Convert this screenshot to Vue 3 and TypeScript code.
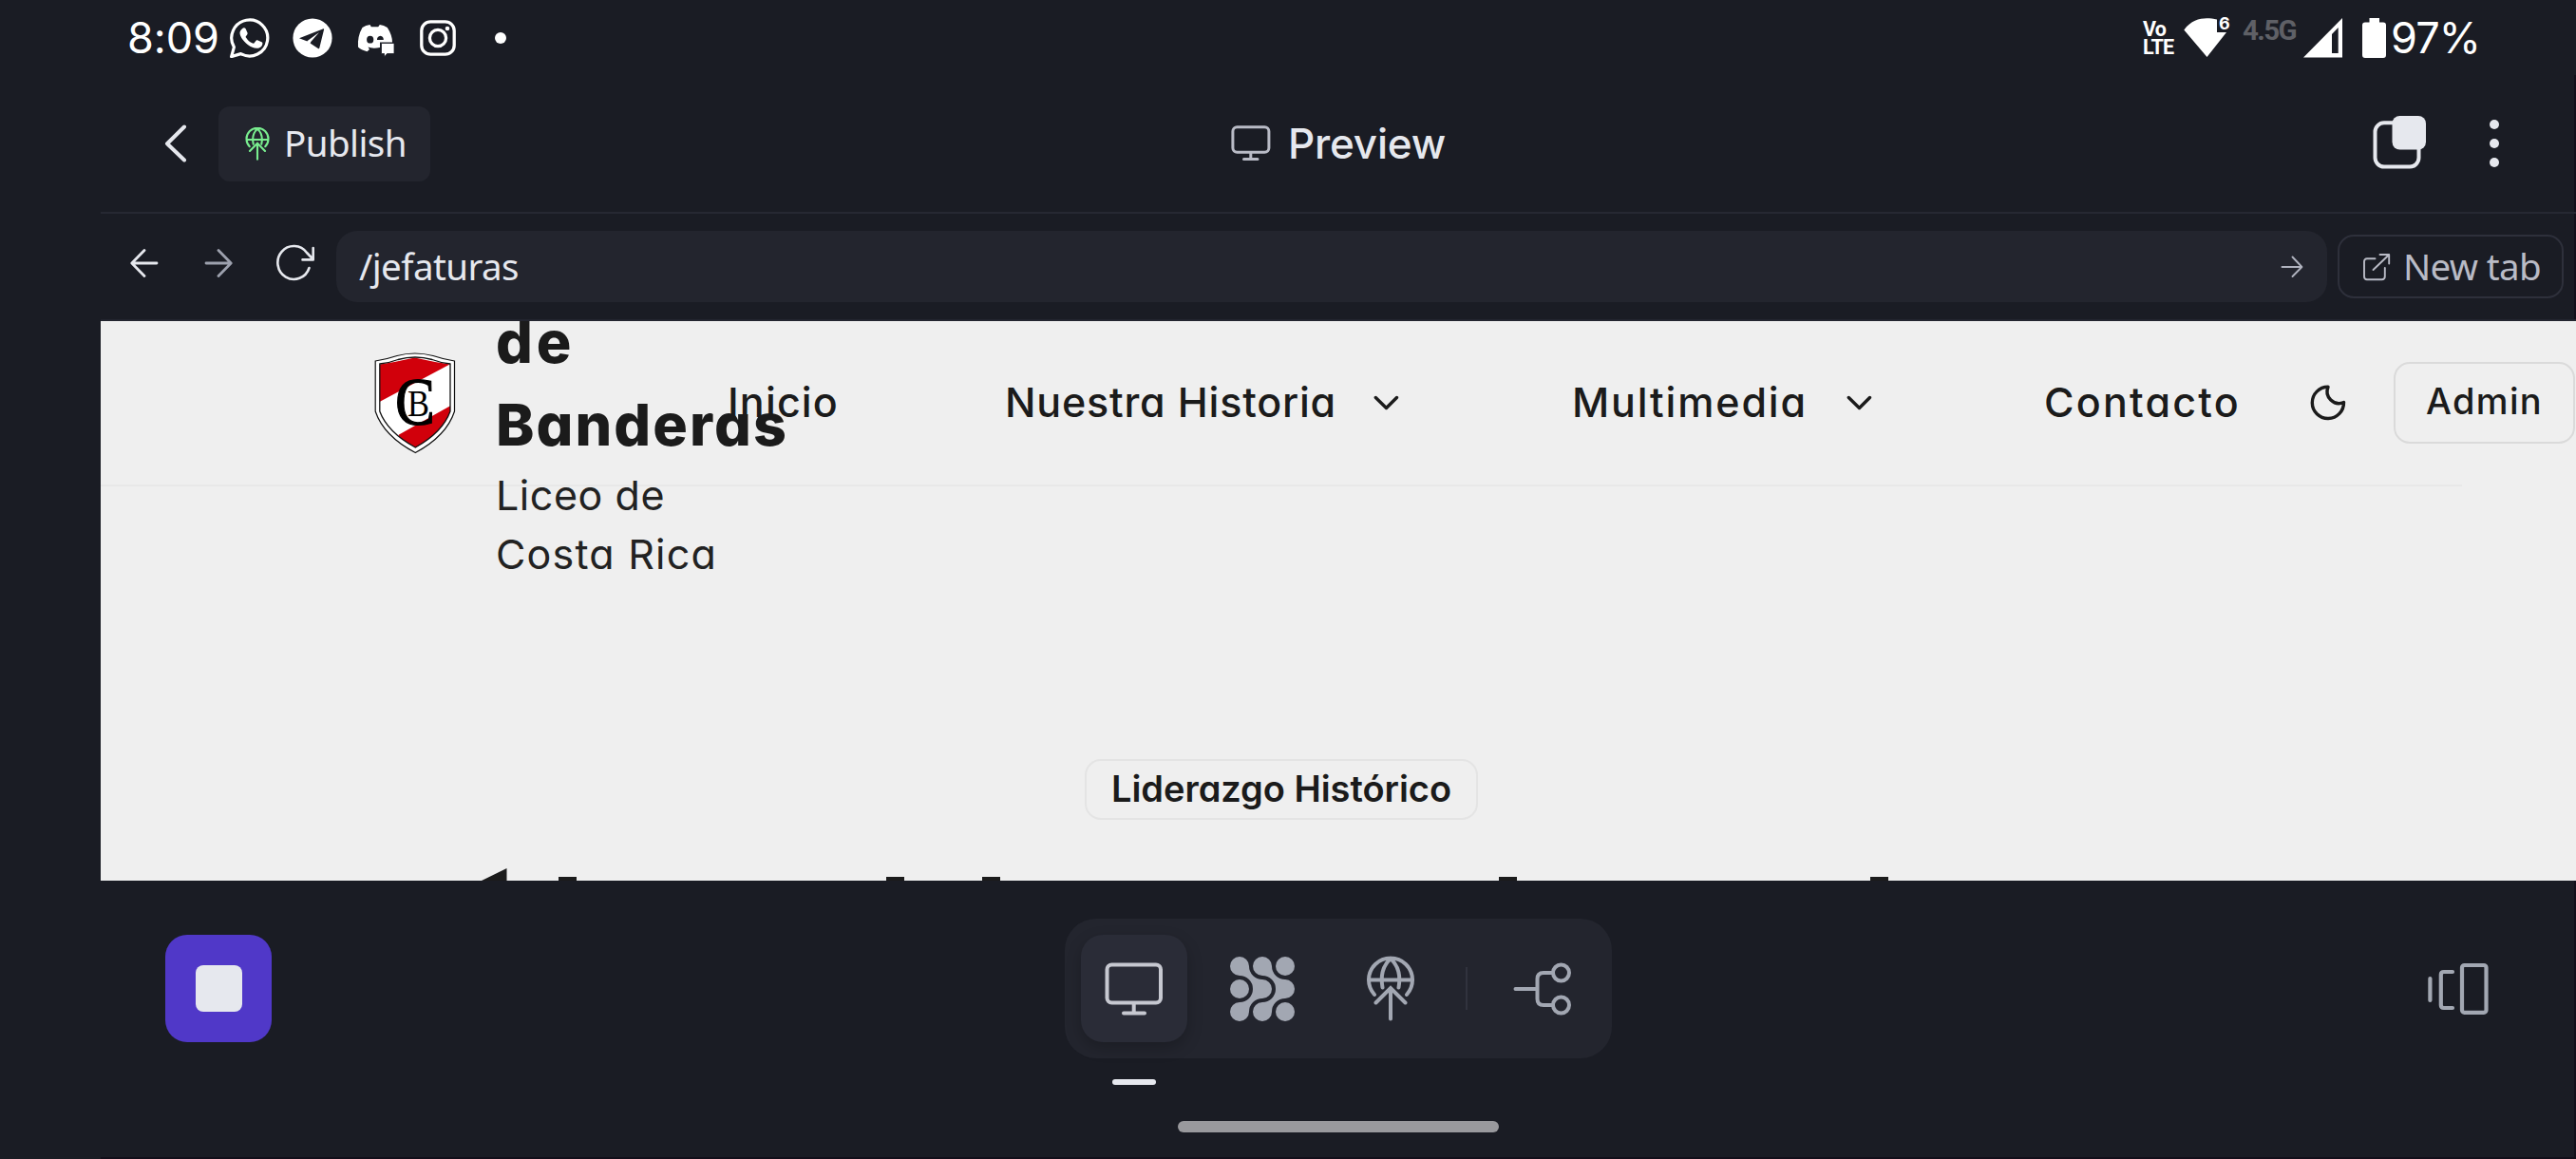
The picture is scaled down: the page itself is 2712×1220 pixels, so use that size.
<script setup lang="ts">
import type { Directive } from 'vue'

// Tracks a label so that its advance width equals the given number of pixels.
const vFit: Directive<HTMLElement, number> = {
  mounted(el, { value }) {
    const count = (el.textContent ?? '').trim().length
    const natural = el.getBoundingClientRect().width
    el.style.letterSpacing = `${((value - natural) / count).toFixed(3)}px`
  },
}

const headingTops: number[] = [482, 827, 928, 1472, 1863]
</script>

<template>
  <div class="device">
    <header class="status">
      <div class="status-left">
        <span v-fit="97" class="clock">8:09</span>
        <svg class="i-wa" width="42" height="42" viewBox="0 0 42 42">
          <path d="M1.6 40.6 4.4 30.6A19 19 0 1 1 11.6 37.6Z" fill="none" stroke="#fff" stroke-width="3.2" stroke-linejoin="round" />
          <path d="M13 11.2c1-1.2 2.900-1.300 3.500-.1l2 4.500c.4 1-.3 1.900-1.500 3.400-.5.6-.4 1 0 1.600 1.800 2.900 3.900 4.800 7 6 .7.300 1.100.1 1.600-.4l2-2.500c.6-.7 1.200-.6 1.900-.3l4 1.900c.7.4 1 .7.9 1.400-.3 3.400-3 5.300-6.300 5.100C21 31.500 11 22.500 10.500 16c-.1-2 1-3.600 2.500-4.800Z" fill="#fff" />
        </svg>
        <svg class="i-tg" width="42" height="42" viewBox="0 0 42 42">
          <circle cx="21" cy="21" r="20.600" fill="#fff" />
          <path d="M7 21.300 32.500 11.200c.5-.2.7.1.6.7L28.300 31.500c-.2.800-.7 1-1.400.5L15.500 24.600Z" fill="#1a1c24" />
          <path d="M15.300 24.300 28 15 19.500 24.800 16.800 30Z" fill="#fff" />
        </svg>
        <svg class="i-dc" width="40" height="36" viewBox="0 0 40 36">
          <path fill-rule="evenodd" d="M5.500 5Q9 2.600 13.500 2l1.300 2.200h7.400L23.800 2q4.400.7 8 3Q37 13 37 20.500H24V26q-8 1.500-12.500-.5l1.500 2.500-2.500 2.200Q4 28.500 1 25.500.2 14 5.500 5ZM13.700 13.800a3.600 3.900 0 1 0 0 7.800 3.600 3.900 0 0 0 0-7.800ZM24.500 13.800q-3.400.300-3.600 4.200h6.900q0-3.700-3.300-4.200Z" fill="#fff" />
          <path d="M25.500 21.500H39V32.500H31.500L28.500 36V32.500H25.500Z" fill="#fff" stroke="#1a1c24" stroke-width="0.800" />
        </svg>
        <svg class="i-ig" width="38" height="38" viewBox="0 0 38 38">
          <rect x="1.800" y="1.800" width="34.400" height="34.400" rx="9.500" fill="none" stroke="#fff" stroke-width="3.300" />
          <circle cx="19" cy="19" r="8.600" fill="none" stroke="#fff" stroke-width="3.300" />
          <circle cx="29" cy="9" r="2.300" fill="#fff" />
        </svg>
        <i class="more-dot"></i>
      </div>
      <div class="status-right">
        <div class="volte"><span>Vo</span><span>LTE</span></div>
        <div class="wifi">
          <svg width="46" height="42" viewBox="0 0 46 42">
            <path d="M.3 12.500C11 -1.500 24 -.5 35 1.500V15H45L24.500 41Z" fill="#fff" />
          </svg>
          <span class="wifi-gen">6</span>
        </div>
        <span v-fit="56" class="net">4.5G</span>
        <svg class="i-sig" width="42" height="42" viewBox="0 0 42 42">
          <path fill-rule="evenodd" d="M0 41.500 41 0V41.500ZM30 17V37H36.700V10Z" fill="#fff" />
        </svg>
        <svg class="i-bat" width="26" height="42" viewBox="0 0 26 42">
          <path d="M7.500 0H18V4.500H22Q25 4.500 25 7.500V39Q25 42 22 42H3Q0 42 0 39V7.500Q0 4.500 3 4.500H7.500Z" fill="#fff" />
        </svg>
        <span v-fit="94" class="pct">97%</span>
      </div>
    </header>

    <main class="app">
      <div class="topbar">
        <div class="top-left">
          <svg class="back" width="24" height="40" viewBox="0 0 24 40" fill="none" stroke="#e6e8ee" stroke-width="4" stroke-linecap="round" stroke-linejoin="round">
            <path d="M21 2.500 3 20.200 21 37.500" />
          </svg>
          <button class="publish">
            <svg width="26" height="35" viewBox="0 0 52 69" fill="none" stroke="#79ee8f" stroke-width="4.200" stroke-linecap="round">
              <path d="M9.500 40A23 23 0 1 1 42.500 40M3 25.500H49M17.500 35Q13 14 26 3Q39 14 34.500 35M10 49.500 26 33 42 49.500M26 34V67" />
            </svg>
            <span v-fit="129" class="plex">Publish</span>
          </button>
        </div>
        <div class="top-title">
          <svg width="42" height="38" viewBox="0 0 42 38" fill="none" stroke="#b9bbc6" stroke-width="3" stroke-linecap="round">
            <rect x="1.900" y="1.700" width="38" height="26.600" rx="4.500" /><path d="M20.800 28.500V35.500M13.500 35.500H28" />
          </svg>
          <span v-fit="166" class="title">Preview</span>
        </div>
        <div class="top-right">
          <svg width="58" height="58" viewBox="0 0 58 58">
            <rect x="2.500" y="8.300" width="46" height="46.200" rx="9.500" fill="none" stroke="#e6e8ee" stroke-width="4" />
            <rect x="20.500" y="1" width="35.500" height="35.500" rx="8" fill="#e6e8ee" />
          </svg>
          <div class="kebab"><i></i><i></i><i></i></div>
        </div>
      </div>

      <div class="addressbar">
        <svg class="nav-back" width="30" height="30" viewBox="0 0 30 30" fill="none" stroke="#e6e8ee" stroke-width="2.800" stroke-linecap="round" stroke-linejoin="round"><path d="M28 15H2M15 1.500 1.800 15 15 28.500" /></svg>
        <svg class="nav-fwd" width="30" height="30" viewBox="0 0 30 30" fill="none" stroke="#9da1ae" stroke-width="2.800" stroke-linecap="round" stroke-linejoin="round"><path d="M2 15H28M15 1.500 28.200 15 15 28.500" /></svg>
        <svg class="reload" width="42" height="40" viewBox="0 0 42 40" fill="none" stroke="#e6e8ee" stroke-width="2.600" stroke-linecap="round" stroke-linejoin="round">
          <path d="M35.500 25A17 17.500 0 1 1 33 9L39.700 16M39.700 4V16.400H28.500" />
        </svg>
        <div class="url">
          <span v-fit="168" class="plex">/jefaturas</span>
          <svg width="24" height="24" viewBox="0 0 24 24" fill="none" stroke="#b0b3bf" stroke-width="1.900" stroke-linecap="round" stroke-linejoin="round"><path d="M1.500 12H22M12.500 1.500 22.400 12 12.500 22" /></svg>
        </div>
        <button class="newtab">
          <svg width="30" height="30" viewBox="0 0 30 30" fill="none" stroke="#b9bbc6" stroke-width="1.900" stroke-linecap="round" stroke-linejoin="round">
            <path d="M13.500 6.300H5Q2 6.300 2 9.300V25Q2 28.200 5 28.200H20.500Q23.800 28.200 23.800 25V16M18.500 2H28.200V11.500M28 2.200 11.500 18" />
          </svg>
          <span v-fit="145" class="plex">New tab</span>
        </button>
      </div>

      <section class="page">
        <nav class="site-nav">
          <svg class="crest" width="86" height="107" viewBox="0 0 86 107">
            <defs>
              <clipPath id="field"><path d="M6 12.500Q23 10 42.500 5.500 62 10 80 12.500V62Q72 84 43.500 100 14 84 6 62Z" /></clipPath>
            </defs>
            <path d="M1.200 9Q12 7.500 24 3.500 42.500-1.500 62 3.500 74 7.500 84.500 9V62Q76 88 43.300 105.500 10 88 1.200 62Z" fill="#fff" stroke="#111" stroke-width="1.200" />
            <g clip-path="url(#field)">
              <rect width="86" height="107" fill="#fff" />
              <path d="M0 0H86V9L0 55Z" fill="#d1000b" />
              <path d="M86 53V107H26V86.500L0 101Z" fill="#d1000b" />
            </g>
            <path d="M5.800 12Q16 11 25 7.500 43 2.500 61 7.500 70 11 80 12V62Q72 84 43.300 100 14 84 5.800 62Z" fill="none" stroke="#111" stroke-width="1.300" />
            <text x="22" y="75.500" textLength="42" lengthAdjust="spacingAndGlyphs" font-family="'Liberation Serif', serif" font-size="72" stroke="#000" stroke-width="1.200">C</text>
            <text x="35" y="66.500" textLength="23" lengthAdjust="spacingAndGlyphs" font-family="'Liberation Serif', serif" font-size="41">B</text>
          </svg>
          <div class="brand">
            <div class="brand-name">
              <div><span v-fit="83">de</span></div>
              <div><span v-fit="308">Banderas</span></div>
            </div>
            <div class="brand-sub">
              <div><span v-fit="178">Liceo de</span></div>
              <div><span v-fit="233">Costa Rica</span></div>
            </div>
          </div>
          <a v-fit="117" class="link l1">Inicio</a>
          <a v-fit="349" class="link l2">Nuestra Historia</a>
          <svg class="chev c1" width="27" height="17" viewBox="0 0 27 17"><path d="M2.300 2.500 13.500 13.500 24.500 2.500" /></svg>
          <a v-fit="248" class="link l3">Multimedia</a>
          <svg class="chev c2" width="27" height="17" viewBox="0 0 27 17"><path d="M2.300 2.500 13.500 13.500 24.500 2.500" /></svg>
          <a v-fit="207" class="link l4">Contacto</a>
          <svg class="moon" width="38" height="38" viewBox="0 0 38 38" fill="none" stroke="#1b1b1b" stroke-width="3.400" stroke-linecap="round" stroke-linejoin="round">
            <path d="M19 2.300A12.500 12.500 0 0 0 35.500 18.500 16.600 16.600 0 1 1 19 2.300Z" />
          </svg>
          <button class="admin"><span v-fit="123">Admin</span></button>
        </nav>
        <div class="badge"><span v-fit="358">Liderazgo Histórico</span></div>
        <svg class="cut-heading" width="2606" height="14" viewBox="0 0 2606 14" fill="#1b1b1b">
          <path d="M401 14 427.500 1V14Z" />
          <rect v-for="x in headingTops" :key="x" :x="x" y="10" width="19" height="4" />
        </svg>
      </section>

      <footer class="dock">
        <button class="stop"><i></i></button>
        <div class="tools">
          <div class="tool active">
            <svg width="62" height="58" viewBox="0 0 62 58" fill="none" stroke="#c6c8d0" stroke-width="4" stroke-linecap="round">
              <rect x="2.500" y="3.500" width="56.500" height="40" rx="5" /><path d="M30.700 44V54M20 54.500H42" />
            </svg>
          </div>
          <svg class="t-grid" width="68" height="68" viewBox="0 0 68 68" fill="#a2a7b2">
            <path d="M10 20A14 14 0 0 1 10 48A10 10 0 1 0 20 58A14 14 0 0 1 34 44A10 10 0 0 0 34 24A14 14 0 0 1 20 10A10 10 0 1 0 10 20Z" />
            <path d="M34 20A14 14 0 0 1 34 48A10 10 0 1 0 44 58A14 14 0 0 1 58 44A10 10 0 0 0 58 24A14 14 0 0 1 44 10A10 10 0 1 0 34 20Z" />
            <circle cx="58" cy="10" r="10" /><circle cx="10" cy="34" r="10" /><circle cx="58" cy="58" r="10" />
          </svg>
          <svg class="t-globe" width="52" height="69" viewBox="0 0 52 69" fill="none" stroke="#a2a7b2" stroke-width="4" stroke-linecap="round">
            <path d="M9 41A23 23 0 1 1 43 41M3 25.500H49M17.500 33.500Q14 14 26 3Q38 14 34.500 33.500M10.500 49.500 26 34 41.500 49.500M26 35V66.500" />
          </svg>
          <i class="sep"></i>
          <svg class="t-branch" width="64" height="58" viewBox="0 0 64 58" fill="none" stroke="#a2a7b2" stroke-width="4" stroke-linecap="round">
            <circle cx="51.500" cy="12" r="8.500" /><circle cx="51.500" cy="46" r="8.500" />
            <path d="M3.500 29H26M43 12H33Q26.500 12 26.500 18.500V39.500Q26.500 46 33 46H43" />
          </svg>
        </div>
        <svg class="panels" width="66" height="58" viewBox="0 0 66 58" fill="none" stroke="#a2a7b2" stroke-width="4.200" stroke-linecap="round" stroke-linejoin="round">
          <path d="M3.400 18V41M27 11H18Q14.800 11 14.800 14V46Q14.800 49 18 49H27" /><rect x="37" y="4" width="25.500" height="49.800" rx="2.500" />
        </svg>
        <i class="active-mark"></i>
        <i class="home-pill"></i>
      </footer>
    </main>
  </div>
</template>

<style>
body { margin: 0; background: #1a1c24; overflow: hidden; }
</style>

<style scoped>
.device { width: 2712px; height: 1220px; background: #1a1c24; overflow: hidden; font-family: Inter, "Liberation Sans", sans-serif; font-feature-settings: "cv11" 1; display: flex; flex-direction: column; }
.device * { box-sizing: border-box; }
.device span, .device a { white-space: nowrap; flex: none; }
svg { display: block; flex: none; }
button { background: none; border: 0; padding: 0; margin: 0; font: inherit; color: inherit; }
.plex { font-family: "Noto Sans", sans-serif; font-size: 38.5px; line-height: 50px; position: relative; top: -1px; }

.status { height: 79px; display: flex; justify-content: space-between; align-items: center; color: #fff; }
.status-left, .status-right { display: flex; align-items: center; height: 79px; }
.status-left { padding-left: 134px; }
.status-right { padding-right: 101px; }
.clock, .pct { font-size: 45px; line-height: 79px; }
.i-wa { margin-left: 11px; }
.i-tg { margin-left: 24px; }
.i-dc { margin-left: 26px; margin-top: 5px; }
.i-ig { margin-left: 26px; }
.more-dot { width: 12px; height: 12px; border-radius: 50%; background: #fff; margin-left: 41px; }
.volte { display: flex; flex-direction: column; font: 700 21.500px/19px Roboto, sans-serif; width: 43px; letter-spacing: -.8px; }
.wifi { position: relative; width: 48px; }
.wifi-gen { position: absolute; left: 37px; top: -3px; font-size: 18px; line-height: 18px; font-weight: 700; }
.net { font-family: Roboto, sans-serif; font-size: 29.500px; font-weight: 700; line-height: 30px; color: #5f6066; margin: 0 8px 16px 14px; }
.i-bat { margin: 0 4px 0 20px; }

.app { width: 2606px; margin-left: 106px; flex: 1; display: flex; flex-direction: column; }
.topbar { height: 146px; border-bottom: 2px solid #262832; box-shadow: inset -2px 0 #120f1a; display: grid; grid-template-columns: 1fr auto 1fr; align-items: center; }
.top-left { display: flex; align-items: center; padding-left: 67px; }
.publish { margin-left: 33px; width: 223px; height: 79px; border-radius: 12px; background: #23252e; display: flex; align-items: center; padding-left: 28px; color: #e6e8ee; }
.publish .plex { margin-left: 15px; }
.top-title { display: flex; align-items: center; gap: 18px; color: #e6e8ee; }
.title { font-size: 44px; font-weight: 500; line-height: 60px; }
.top-right { display: flex; justify-content: flex-end; align-items: center; padding-right: 81px; }
.top-right svg { margin-right: 65px; margin-top: -2px; }
.kebab { display: flex; flex-direction: column; gap: 9.700px; }
.kebab i { width: 10px; height: 10px; border-radius: 50%; background: #e6e8ee; }

.addressbar { height: 113px; border-bottom: 2px solid #23252f; box-shadow: inset -2px 0 #120f1a; display: flex; align-items: center; padding: 0 13px 0 31px; }
.nav-back { margin-bottom: 8px; }
.nav-fwd { margin: 0 0 8px 48px; }
.reload { margin: 0 0 8px 45px; }
.url { flex: 1; margin: 0 11px 0 22px; height: 75px; border-radius: 22px; background: #23252e; display: flex; align-items: center; justify-content: space-between; padding: 0 25px 0 24px; color: #e6e8ee; }
.newtab { width: 238px; height: 67px; border: 2px solid #2e303b; border-radius: 17px; display: flex; align-items: center; padding-left: 24px; color: #b9bbc6; }
.newtab .plex { margin-left: 13px; }

.page { height: 589px; background: #efefef; color: #1b1b1b; overflow: hidden; display: flex; flex-direction: column; }
.site-nav { height: 174px; width: 2606px; flex: none; display: flex; align-items: center; padding-left: 288px; background: linear-gradient(#e8e8e8, #e8e8e8) left bottom / 2486px 2px no-repeat; padding-bottom: 2px; }
.brand { width: 244px; margin-left: 42px; padding-top: 83px; }
.brand-name { font-size: 61px; font-weight: 800; line-height: 87px; }
.brand-sub { font-size: 43px; line-height: 62px; color: #222; margin-top: -1px; }
.link { font-size: 43px; font-weight: 500; line-height: 60px; margin-bottom: 2px; }
.l2 { margin-left: 175px; }
.chev { fill: none; stroke: #1b1b1b; stroke-width: 3.400; stroke-linecap: round; stroke-linejoin: round; }
.c1 { margin-left: 39px; }
.l3 { margin-left: 182px; }
.c2 { margin-left: 41px; }
.l4 { margin-left: 181px; }
.moon { margin-left: 73px; }
.admin { margin-left: 50px; flex: none; width: 191px; height: 86px; border: 2px solid #dadada; border-radius: 17px; font-size: 38px; font-weight: 500; line-height: 78px; padding-bottom: 4px; }
.badge { align-self: center; width: 414px; height: 64px; margin: 287px 0 0 -120px; border: 2px solid #e4e4e4; border-radius: 17px; font-size: 38px; font-weight: 600; line-height: 59px; text-align: center; flex: none; }
.cut-heading { margin-top: auto; }

.dock { flex: 1; display: flex; align-items: flex-start; position: relative; box-shadow: inset -2px -2px #120f1a; }
.stop { width: 112px; height: 113px; margin: 57px 0 0 68px; border-radius: 23px; background: #5038c8; display: flex; align-items: center; justify-content: center; }
.stop i { width: 49px; height: 49px; border-radius: 8px; background: #e6e8ee; }
.tools { width: 576px; height: 147px; margin: 40px 0 0 835px; border-radius: 33px; background: #23252e; display: flex; align-items: center; padding-left: 17px; }
.tool.active { width: 112px; height: 113px; border-radius: 23px; background: #2a2c37; box-shadow: 0 6px 16px rgba(0, 0, 0, .22); display: flex; align-items: center; justify-content: center; }
.t-grid { margin-left: 45px; }
.t-globe { margin-left: 75px; }
.sep { width: 2px; height: 45px; background: #31333e; margin-left: 53px; }
.t-branch { margin-left: 47px; }
.panels { margin: 85px 0 0 858px; }
.active-mark { position: absolute; left: 1065px; top: 209px; width: 46px; height: 6px; border-radius: 3px; background: #e6e8ee; }
.home-pill { position: absolute; left: 1134px; top: 253px; width: 338px; height: 12px; border-radius: 6px; background: #99999d; }
</style>
